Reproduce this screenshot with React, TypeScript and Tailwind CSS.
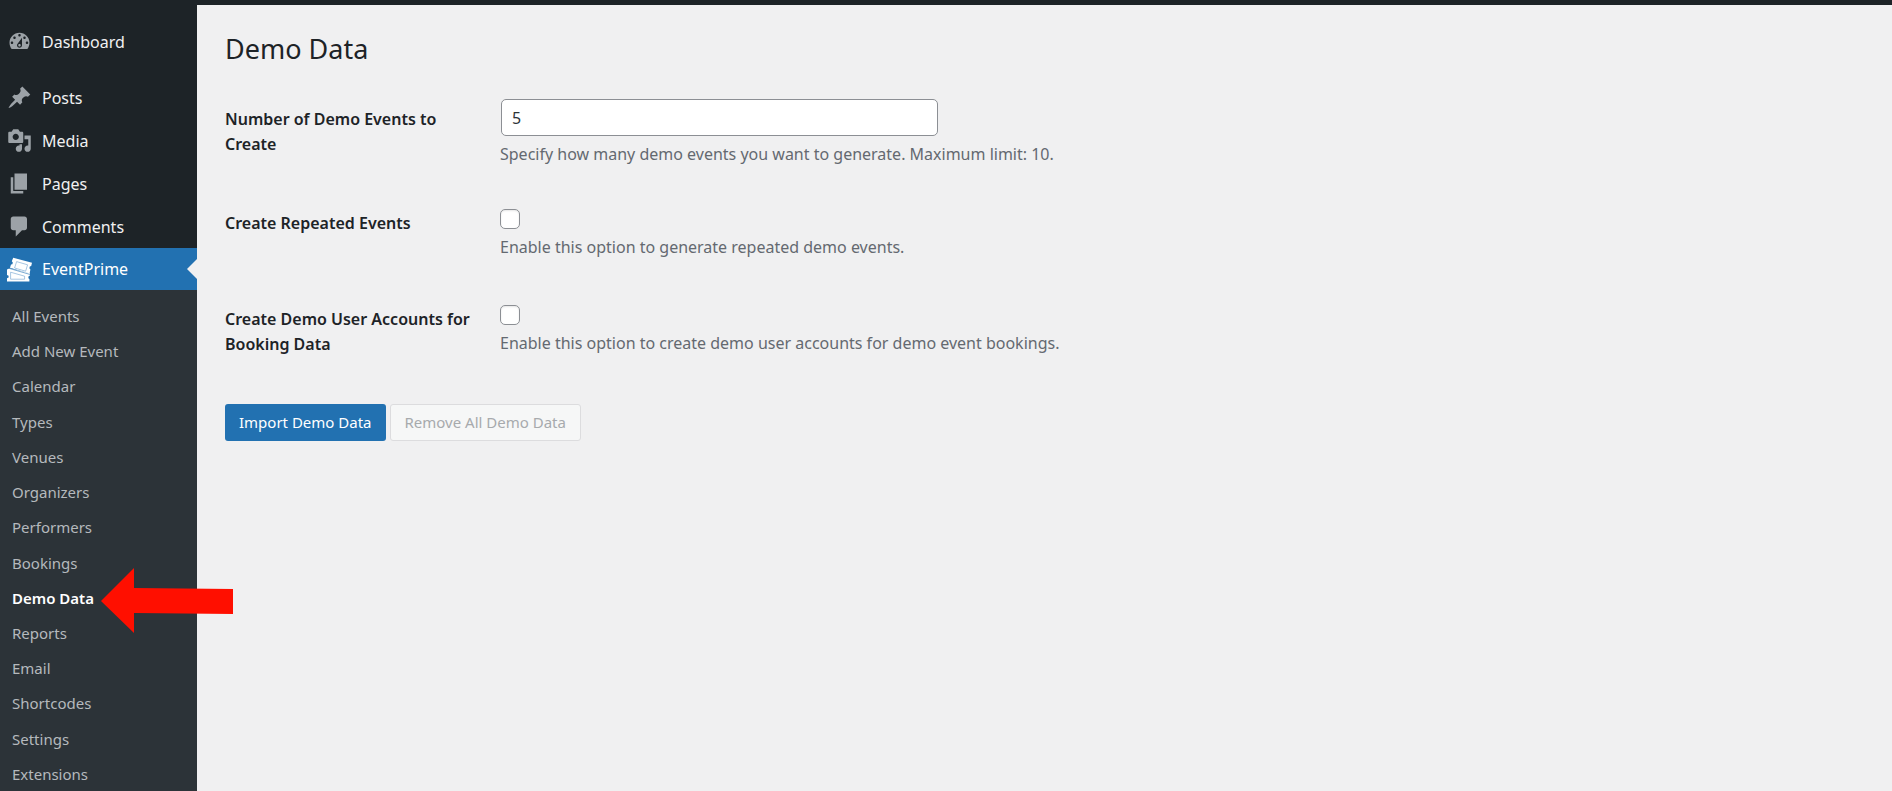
import { useState } from "react";

const ICONS = {
  dashboard:
    "M3.76 16h12.48c1.1-1.37 1.76-3.11 1.76-5 0-4.42-3.58-8-8-8s-8 3.58-8 8c0 1.89.66 3.63 1.76 5zM10 4c.55 0 1 .45 1 1s-.45 1-1 1-1-.45-1-1 .45-1 1-1zM6 6c.55 0 1 .45 1 1s-.45 1-1 1-1-.45-1-1 .45-1 1-1zm8 0c.55 0 1 .45 1 1s-.45 1-1 1-1-.45-1-1 .45-1 1-1zm-5.37 5.55L12 7v6c0 1.1-.9 2-2 2s-2-.9-2-2c0-.57.24-1.08.63-1.45zM4 10c.55 0 1 .45 1 1s-.45 1-1 1-1-.45-1-1 .45-1 1-1zm12 0c.55 0 1 .45 1 1s-.45 1-1 1-1-.45-1-1 .45-1 1-1zm-5 3c0-.55-.45-1-1-1s-1 .45-1 1 .45 1 1 1 1-.45 1-1z",
  post: "M10.44 3.02l1.82-1.82 6.36 6.35-1.83 1.82c-1.05-.68-2.48-.57-3.41.36l-.75.75c-.92.93-1.04 2.35-.35 3.41l-1.83 1.82-2.41-2.41-2.8 2.79c-.42.42-3.38 2.71-3.8 2.29s1.86-3.39 2.28-3.81l2.79-2.79L4.1 9.36l1.83-1.82c1.05.69 2.48.57 3.4-.36l.75-.75c.93-.92 1.05-2.35.36-3.41z",
  media:
    "M13 11V4c0-.55-.45-1-1-1h-1.67L9 1H5L3.67 3H2c-.55 0-1 .45-1 1v7c0 .55.45 1 1 1h10c.55 0 1-.45 1-1zM7 4.5c1.38 0 2.5 1.12 2.5 2.5S8.38 9.5 7 9.5 4.5 8.38 4.5 7 5.62 4.5 7 4.5zM14 6h5v10.5c0 1.38-1.12 2.5-2.5 2.5S14 17.88 14 16.5s1.12-2.5 2.5-2.5c.17 0 .34.02.5.05V9h-3V6zm-4 8.05V13h2v3.5c0 1.38-1.12 2.5-2.5 2.5S7 17.88 7 16.5 8.12 14 9.5 14c.17 0 .34.02.5.05z",
  page: "M6 15V2h10v13H6zm-1 1h8v2H3V5h2v11z",
  comments:
    "M5 2h9c1.1 0 2 .9 2 2v7c0 1.1-.9 2-2 2h-2l-5 5v-5H5c-1.1 0-2-.9-2-2V4c0-1.1.9-2 2-2z",
};

const submenu = [
  "All Events",
  "Add New Event",
  "Calendar",
  "Types",
  "Venues",
  "Organizers",
  "Performers",
  "Bookings",
  "Demo Data",
  "Reports",
  "Email",
  "Shortcodes",
  "Settings",
  "Extensions",
];

interface MenuItemProps {
  label: string;
  icon: keyof typeof ICONS;
}

const MenuItem = ({ label, icon }: MenuItemProps) => (
  <a
    href="#"
    className="flex h-[43px] items-center gap-[10px] pl-[7px] text-[#f0f0f1]"
  >
    <svg viewBox="0 0 20 20" className="size-[25px] fill-[#9ca2a7]">
      <path d={ICONS[icon]} fillRule="evenodd" />
    </svg>
    {label}
  </a>
);

const TicketsIcon = () => (
  <svg viewBox="0 0 25 25" className="size-[25px]">
    <path
      fill="#fff"
      d="M6.2.8L25 5.8l-.8 3.2-1.4.4-.4 1.8 1 1.2-.8 4-19.6-5.6 1-3.2 1.4-.4.4-1.8-1-1.2z"
    />
    <path
      fill="#fff"
      d="M0 12.6l2.6-1.4L22.8 16v2.8l-1.4.8v1.6l1 .8v2.4H0v-3.2l1.6-.8v-1.6L0 18z"
    />
    <path
      fill="none"
      stroke="#2271b1"
      strokeWidth=".6"
      d="M1.6 11.2l21.2 6.2"
    />
    <path
      fill="none"
      stroke="#6ba0cf"
      strokeWidth=".6"
      strokeLinejoin="round"
      d="M9.6 4.6l11 3.2-2 6.4-11-3.2zM3.6 15.2l14 4v3h-14z"
    />
  </svg>
);

interface CheckRowProps {
  id: string;
  label: string;
  description: string;
}

const CheckRow = ({ id, label, description }: CheckRowProps) => {
  const [checked, setChecked] = useState(false);

  return (
    <div className="flex min-h-24">
      <label
        htmlFor={id}
        className="mt-[2px] w-[275px] shrink-0 pr-4 leading-[25px] font-semibold"
      >
        {label}
      </label>
      <div className="flex flex-col gap-[6px]">
        <input
          id={id}
          type="checkbox"
          checked={checked}
          onChange={() => setChecked(!checked)}
          className="size-5 appearance-none rounded-[5px] border border-[#8c8f94] bg-white shadow-[inset_0_1px_2px_rgba(0,0,0,0.1)] checked:bg-[#2271b1]"
        />
        <p className="leading-[25px] text-[#646970]">{description}</p>
      </div>
    </div>
  );
};

const App = () => {
  const [count, setCount] = useState("5");

  return (
    <div className="flex min-h-screen bg-[#f0f0f1] font-['Noto_Sans',sans-serif] text-base text-[#1d2327]">
      <aside className="relative flex w-[197px] shrink-0 flex-col bg-[#1d2327] pt-5">
        <MenuItem label="Dashboard" icon="dashboard" />
        <div className="mt-[13px]">
          <MenuItem label="Posts" icon="post" />
          <MenuItem label="Media" icon="media" />
          <MenuItem label="Pages" icon="page" />
          <MenuItem label="Comments" icon="comments" />
        </div>
        <a
          href="#"
          className="relative flex h-[42px] items-center gap-[10px] bg-[#2271b1] pl-[7px] text-white"
        >
          <TicketsIcon />
          EventPrime
          <span className="absolute top-[11px] right-0 border-y-10 border-r-10 border-y-transparent border-r-[#f0f0f1]" />
        </a>
        <nav className="flex flex-1 flex-col justify-between bg-[#2c3338] pt-[14px] pb-[5px]">
          {submenu.map((item) => (
            <a
              key={item}
              href="#"
              className={
                item === "Demo Data"
                  ? "relative pl-3 text-[15px] leading-6 font-semibold text-white"
                  : "pl-3 text-[15px] leading-6 text-[#b5b9bd]"
              }
            >
              {item}
              {item === "Demo Data" && (
                <svg
                  viewBox="0 0 134 68"
                  className="absolute -top-[19px] left-[100px] z-10 h-[68px] w-[134px]"
                >
                  <path
                    fill="#ff0f00"
                    d="M1 34L34 1v20l99 1v25l-99-1v20z"
                  />
                </svg>
              )}
            </a>
          ))}
        </nav>
      </aside>

      <main className="min-w-0 flex-1 border-t-5 border-[#1d2327] px-7 pt-6">
        <h1 className="text-[27px] leading-10">Demo Data</h1>
        <form className="mt-[30px]" onSubmit={(e) => e.preventDefault()}>
          <div className="flex min-h-[110px]">
            <label
              htmlFor="count"
              className="mt-2 w-[275px] shrink-0 pr-4 leading-[25px] font-semibold"
            >
              Number of Demo Events to Create
            </label>
            <div className="flex flex-col gap-[6px]">
              <input
                id="count"
                type="text"
                value={count}
                onChange={(e) => setCount(e.target.value)}
                className="ml-px h-[37px] w-[437px] rounded-[5px] border border-[#8c8f94] bg-white px-[10px] text-[#2c3338]"
              />
              <p className="leading-[25px] text-[#646970]">
                Specify how many demo events you want to generate. Maximum
                limit: 10.
              </p>
            </div>
          </div>
          <CheckRow
            id="repeated"
            label="Create Repeated Events"
            description="Enable this option to generate repeated demo events."
          />
          <CheckRow
            id="accounts"
            label="Create Demo User Accounts for Booking Data"
            description="Enable this option to create demo user accounts for demo event bookings."
          />
          <div className="mt-[3px] flex gap-1 text-[15px]">
            <button
              type="submit"
              className="h-[37px] rounded-[3px] bg-[#2271b1] px-[14px] text-white"
            >
              Import Demo Data
            </button>
            <button
              type="button"
              disabled
              className="h-[37px] rounded-[3px] border border-[#dcdcde] bg-[#f6f7f7] px-[14px] text-[#a7aaad]"
            >
              Remove All Demo Data
            </button>
          </div>
        </form>
      </main>
    </div>
  );
};

export default App;
